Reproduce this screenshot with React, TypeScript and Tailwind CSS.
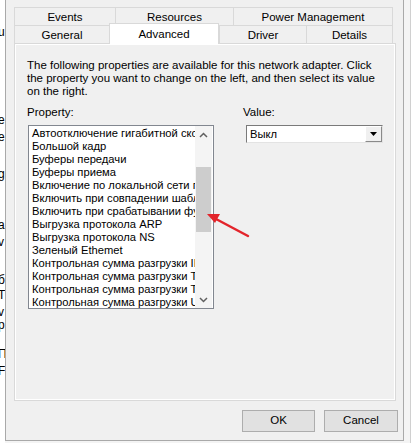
import React from "react";

const rows = [
  "Автоотключение гигабитной скорости",
  "Большой кадр",
  "Буферы передачи",
  "Буферы приема",
  "Включение по локальной сети по",
  "Включить при совпадении шаблона",
  "Включить при срабатывании функции",
  "Выгрузка протокола ARP",
  "Выгрузка протокола NS",
  "Зеленый Ethemet",
  "Контрольная сумма разгрузки IPv4",
  "Контрольная сумма разгрузки TCP",
  "Контрольная сумма разгрузки TCP",
  "Контрольная сумма разгрузки UDP",
];

function LeftStrip() {
  return (
    <div className="w-[5px] h-[443px] bg-white overflow-hidden flex flex-col text-[12px] leading-[13px] text-black">
      <span className="mt-[26px] -ml-[2px]">u</span>
      <span className="mt-[75px] -ml-[2px]">e</span>
      <span className="mt-[4px] -ml-[2px]">e</span>
      <span className="mt-[24px] -ml-[2px] underline">g</span>
      <span className="mt-[38px] -ml-[2px]">a</span>
      <span className="mt-[4px] -ml-[2px]">v</span>
      <span className="mt-[25px] -ml-[2px]">б</span>
      <span className="mt-[2px] -ml-[2px]">T</span>
      <span className="mt-[4px] -ml-[2px]">v</span>
      <span className="mt-[0px] -ml-[2px]">p</span>
      <span className="mt-[16px] -ml-[2px]">П</span>
      <span className="mt-[4px] -ml-[2px]">F</span>
    </div>
  );
}

function Tab({ label, w, last }: { label: string; w: string; last?: boolean }) {
  return (
    <div
      className={`${w} h-full flex items-center justify-center pt-[2px] border-t border-l border-[#d9d9d9] ${
        last ? "border-r" : ""
      }`}
    >
      {label}
    </div>
  );
}

function Chevron({ up }: { up?: boolean }) {
  return (
    <svg width="9" height="6" viewBox="0 0 9 6" className={up ? "" : "rotate-180"}>
      <path d="M1 5 L4.5 1.5 L8 5" fill="none" stroke="#606060" strokeWidth="1.5" />
    </svg>
  );
}

export default function App() {
  return (
    <div className="relative w-[411px] h-[443px] flex bg-[#f4f4f4] overflow-hidden text-[11.5px] text-black font-['Liberation_Sans',Arial,sans-serif]">
      <LeftStrip />
      <div className="w-[399px] h-[441px] bg-[#f0f0f0] border-l border-r border-b border-[#a9a9a9] flex flex-col pl-[8px] pt-[7px]">
        {/* tabs */}
        <div className="flex h-[18px] w-[379px]">
          <Tab label="Events" w="w-[101px]" />
          <Tab label="Resources" w="w-[118px]" />
          <Tab label="Power Management" w="w-[160px]" last />
        </div>
        <div className="flex h-[18px] w-[379px]">
          <Tab label="General" w="w-[95px]" />
          <div className="relative z-10 w-[110px] h-[21px] -mt-[2px] bg-white border-t border-l border-r border-[#d9d9d9] flex items-start justify-center pt-[2px]">
            Advanced
          </div>
          <Tab label="Driver" w="w-[87px]" />
          <Tab label="Details" w="w-[87px]" last />
        </div>

        {/* panel */}
        <div className="w-[382px] h-[358px] border border-[#d9d9d9] shadow-[inset_0_0_0_1px_#ffffff] px-[12px] pt-[15px] flex flex-col">
          <p className="leading-[13px] whitespace-nowrap">
            The following properties are available for this network adapter. Click
            <br />
            the property you want to change on the left, and then select its value
            <br />
            on the right.
          </p>
          <div className="flex mt-[8px]">
            <div className="flex flex-col w-[216px]">
              <span className="leading-[13px]">Property:</span>
              <div className="mt-[6px] ml-[1px] w-[186px] h-[184px] border border-[#828790] bg-white flex">
                <div className="w-[166px] pl-[3px] pt-[1px] overflow-hidden text-[11.2px]">
                  {rows.map((r, i) => (
                    <div key={i} className="whitespace-nowrap leading-[13px] h-[13px]">
                      {r}
                    </div>
                  ))}
                </div>
                <div className="w-[17px] bg-[#f4f4f4] flex flex-col">
                  <div className="h-[17px] flex items-center justify-center">
                    <Chevron up />
                  </div>
                  <div className="flex-1 flex flex-col items-center">
                    <div className="mt-[24px] w-[15px] h-[65px] bg-[#cdcdcd]" />
                  </div>
                  <div className="h-[17px] flex items-center justify-center">
                    <Chevron />
                  </div>
                </div>
              </div>
            </div>
            <div className="flex flex-col">
              <span className="leading-[13px]">Value:</span>
              <div className="mt-[6px] ml-[3px] w-[137px] h-[18px] bg-white border border-t-[#7a7a7a] border-l-[#7a7a7a] border-r-[#e3e3e3] border-b-[#e3e3e3] flex items-center">
                <span className="flex-1 pl-[3px] leading-[13px] text-[11.2px]">Выкл</span>
                <div className="w-[17px] h-[16px] bg-[#f0f0f0] border border-t-white border-l-white border-r-[#8a8a8a] border-b-[#8a8a8a] flex items-center justify-center">
                  <svg width="7" height="4" viewBox="0 0 7 4">
                    <path d="M0 0 H7 L3.5 4 Z" fill="#000" />
                  </svg>
                </div>
              </div>
            </div>
          </div>
        </div>

        {/* buttons */}
        <div className="flex justify-end gap-[9px] mt-[9px] pr-[5px]">
          <button className="w-[73px] h-[22px] bg-[#e1e1e1] border border-[#adadad]">OK</button>
          <button className="w-[74px] h-[22px] bg-[#e1e1e1] border border-[#adadad]">Cancel</button>
        </div>
      </div>
      <div className="w-[7px] h-[443px] bg-[#f4f4f4] border-r border-[#d0d0d0]" />

      {/* red annotation arrow */}
      <svg className="absolute left-0 top-0 pointer-events-none" width="411" height="443">
        <line x1="248" y1="236" x2="216" y2="219" stroke="#e3242b" strokeWidth="2.5" strokeLinecap="round" />
        <path d="M207 214 L220 214 L215 223 Z" fill="#e3242b" />
      </svg>
    </div>
  );
}
